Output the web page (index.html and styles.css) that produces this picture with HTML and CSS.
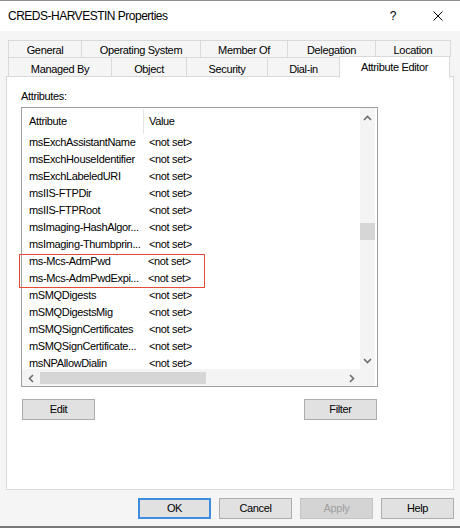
FILE: index.html
```html
<!DOCTYPE html>
<html>
<head>
<meta charset="utf-8">
<title>CREDS-HARVESTIN Properties</title>
<link rel="stylesheet" href="styles.css">
</head>
<body>
<div class="window">
  <div class="titlebar">
    <span class="title">CREDS-HARVESTIN Properties</span>
    <span class="help">?</span>
    <span class="close"><svg width="10" height="10" viewBox="0 0 10 10"><path d="M0.5 0.5L9.5 9.5M9.5 0.5L0.5 9.5" stroke="#000" stroke-width="1" fill="none"/></svg></span>
  </div>
  <div class="main">
    <div class="tabs">
      <div class="tabrow row1">
        <div class="tab t-general">General</div>
        <div class="tab t-os">Operating System</div>
        <div class="tab t-member">Member Of</div>
        <div class="tab t-deleg">Delegation</div>
        <div class="tab t-loc last">Location</div>
      </div>
      <div class="tabrow row2">
        <div class="tab t-managed">Managed By</div>
        <div class="tab t-object">Object</div>
        <div class="tab t-security">Security</div>
        <div class="tab t-dialin">Dial-in</div>
        <div class="tab t-attr selected">Attribute Editor</div>
      </div>
    </div>
    <div class="panel">
      <div class="label">Attributes:</div>
      <div class="listbox">
        <div class="listmain">
          <div class="header">
            <div class="c1">Attribute</div>
            <div class="c2">Value</div>
          </div>
          <div class="rows">
            <div class="row"><div class="c1">msExchAssistantName</div><div class="c2">&lt;not set&gt;</div></div>
            <div class="row"><div class="c1">msExchHouseIdentifier</div><div class="c2">&lt;not set&gt;</div></div>
            <div class="row"><div class="c1">msExchLabeledURI</div><div class="c2">&lt;not set&gt;</div></div>
            <div class="row"><div class="c1">msIIS-FTPDir</div><div class="c2">&lt;not set&gt;</div></div>
            <div class="row"><div class="c1">msIIS-FTPRoot</div><div class="c2">&lt;not set&gt;</div></div>
            <div class="row"><div class="c1">msImaging-HashAlgor...</div><div class="c2">&lt;not set&gt;</div></div>
            <div class="row"><div class="c1">msImaging-Thumbprin...</div><div class="c2">&lt;not set&gt;</div></div>
            <div class="row"><div class="c1">ms-Mcs-AdmPwd</div><div class="c2 shift">&lt;not set&gt;</div></div>
            <div class="row"><div class="c1">ms-Mcs-AdmPwdExpi...</div><div class="c2 shift">&lt;not set&gt;</div></div>
            <div class="row"><div class="c1">mSMQDigests</div><div class="c2">&lt;not set&gt;</div></div>
            <div class="row"><div class="c1">mSMQDigestsMig</div><div class="c2">&lt;not set&gt;</div></div>
            <div class="row"><div class="c1">mSMQSignCertificates</div><div class="c2">&lt;not set&gt;</div></div>
            <div class="row"><div class="c1">mSMQSignCertificate...</div><div class="c2">&lt;not set&gt;</div></div>
            <div class="row"><div class="c1">msNPAllowDialin</div><div class="c2">&lt;not set&gt;</div></div>
          </div>
        </div>
        <div class="vscroll">
          <div class="arrow up"><svg width="9" height="6" viewBox="0 0 9 6"><path d="M1 5L4.5 1.5L8 5" stroke="#6d6d6d" stroke-width="1.6" fill="none"/></svg></div>
          <div class="vtrack"><div class="vthumb"></div></div>
          <div class="arrow down"><svg width="9" height="6" viewBox="0 0 9 6"><path d="M1 1L4.5 4.5L8 1" stroke="#6d6d6d" stroke-width="1.6" fill="none"/></svg></div>
        </div>
        <div class="hscroll">
          <div class="arrow left"><svg width="6" height="9" viewBox="0 0 6 9"><path d="M5 1L1.5 4.5L5 8" stroke="#6d6d6d" stroke-width="1.6" fill="none"/></svg></div>
          <div class="htrack"><div class="hthumb"></div></div>
          <div class="arrow right"><svg width="6" height="9" viewBox="0 0 6 9"><path d="M1 1L4.5 4.5L1 8" stroke="#6d6d6d" stroke-width="1.6" fill="none"/></svg></div>
        </div>
        <div class="corner"></div>
        <div class="highlight"></div>
      </div>
      <div class="btnrow">
        <button class="btn">Edit</button>
        <button class="btn">Filter</button>
      </div>
    </div>
    <div class="footer">
      <button class="btn default">OK</button>
      <button class="btn">Cancel</button>
      <button class="btn disabled">Apply</button>
      <button class="btn">Help</button>
    </div>
  </div>
</div>
</body>
</html>
```

FILE: styles.css
```css
* { box-sizing: border-box; }

html, body {
  margin: 0;
  padding: 0;
}

body {
  width: 460px;
  height: 528px;
  overflow: hidden;
  background: #f5f5f5;
  color: #000;
  font-family: "Liberation Sans", Arial, sans-serif;
  font-size: 11px;
  letter-spacing: -0.35px;
}

.window {
  height: 528px;
  display: flex;
  flex-direction: column;
  border-top: 1px solid #8c8c8c;
  border-bottom: 2px solid #7a7a7a;
}

/* Title bar */
.titlebar {
  height: 30px;
  flex: none;
  background: #fff;
  display: flex;
  align-items: center;
}

.title {
  padding-left: 8px;
  font-size: 12px;
  letter-spacing: -0.5px;
}

.help {
  margin-left: auto;
  width: 20px;
  text-align: center;
  font-size: 12px;
  letter-spacing: 0;
}

.close {
  width: 20px;
  margin-left: 25px;
  margin-right: 12px;
  display: flex;
  justify-content: center;
}

/* Main area */
.main {
  flex: 1;
  padding: 9px 6px 0 6px;
  display: flex;
  flex-direction: column;
}

.tabs {
  margin-left: 2px;
}

.tabrow {
  display: flex;
}

.row1 { height: 17px; }
.row2 { height: 19px; }

.tab {
  border-top: 1px solid #d9d9d9;
  border-left: 1px solid #d9d9d9;
  text-align: center;
  white-space: nowrap;
  background: #f5f5f5;
}

.row1 .tab {
  height: 17px;
  padding-top: 2px;
  line-height: 14px;
}

.row2 .tab {
  height: 19px;
  padding-top: 4px;
  line-height: 14px;
}

.tab.last { border-right: 1px solid #d9d9d9; }

.t-general { width: 73px; }
.t-os { width: 119px; }
.t-member { width: 87px; }
.t-deleg { width: 88px; }
.t-loc { width: 76px; }

.t-managed { width: 103px; }
.t-object { width: 75px; }
.t-security { width: 81px; }
.t-dialin { width: 72px; }
.t-attr { width: 111px; }

.row2 .tab.selected {
  position: relative;
  z-index: 1;
  margin-top: -1px;
  height: 22px;
  padding-top: 3px;
  background: #fff;
  border-right: 1px solid #d9d9d9;
}

/* Panel */
.panel {
  width: 448px;
  height: 414px;
  flex: none;
  background: #fff;
  border: 1px solid #d9d9d9;
  padding: 12px 0 0 14px;
}

.label {
  line-height: 14px;
  margin-bottom: 4px;
}

.listbox {
  position: relative;
  width: 357px;
  height: 280px;
  border: 1px solid #a0a0a0;
  display: grid;
  grid-template-columns: 338px 17px;
  grid-template-rows: 261px 17px;
}

.listmain {
  overflow: hidden;
  background: #fff;
}

.header {
  height: 25px;
  display: grid;
  grid-template-columns: 122px 1fr;
  padding-top: 1px;
  line-height: 25px;
}

.header .c1 {
  border-right: 1px solid #e5e5e5;
}

.c1 {
  padding-left: 7px;
  white-space: nowrap;
  overflow: hidden;
}

.c2 {
  padding-left: 5px;
  white-space: nowrap;
}

.rows {
  padding-top: 1px;
}

.row {
  height: 17px;
  line-height: 17px;
  display: grid;
  grid-template-columns: 122px 1fr;
}

.row .c2 { padding-left: 5px; }
.row .c2.shift { padding-left: 4px; }

/* Scrollbars */
.vscroll {
  background: #f4f4f4;
  border-right: 2px solid #fff;
  display: flex;
  flex-direction: column;
}

.arrow {
  display: flex;
  align-items: center;
  justify-content: center;
  flex: none;
}

.vscroll .arrow {
  height: 17px;
  width: 15px;
}

.vscroll .arrow.up { padding-top: 3px; }

.vtrack {
  flex: 1;
}

.vthumb {
  margin-top: 98px;
  height: 17px;
  width: 15px;
  background: #d6d6d6;
}

.hscroll {
  background: #f4f4f4;
  display: flex;
}

.hscroll .arrow {
  width: 17px;
  height: 17px;
  padding-top: 1px;
}

.htrack {
  flex: 1;
}

.hthumb {
  margin-top: 3px;
  margin-left: 1px;
  width: 166px;
  height: 12px;
  background: #d6d6d6;
}

.corner {
  background: #f4f4f4;
  border-right: 2px solid #fff;
}

.highlight {
  position: absolute;
  left: -3px;
  top: 146px;
  width: 186px;
  height: 34px;
  border: 1px solid #e24a3b;
}

/* Buttons */
.btn {
  width: 73px;
  height: 21px;
  padding: 0;
  margin: 0;
  background: #e1e1e1;
  border: 1px solid #adadad;
  font-family: "Liberation Sans", Arial, sans-serif;
  font-size: 11px;
  letter-spacing: -0.35px;
  color: #000;
  line-height: 19px;
  text-align: center;
}

.btnrow {
  width: 355px;
  margin-top: 12px;
  margin-left: 1px;
  display: flex;
  justify-content: space-between;
}

.footer {
  margin-top: 8px;
  display: flex;
  justify-content: flex-end;
  gap: 8px;
}

.btn.default {
  border: 2px solid #3c8de0;
  line-height: 17px;
}

.btn.disabled {
  background: #d4d4d4;
  border-color: #c4c4c4;
  color: #a0a0a0;
}
```
